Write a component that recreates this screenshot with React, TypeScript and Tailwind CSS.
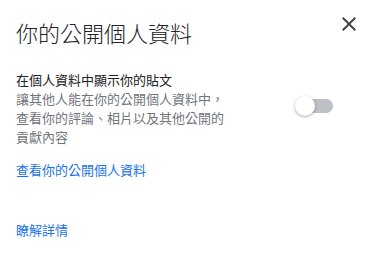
import React, { useState } from "react";

const font = { fontFamily: '"Noto Sans CJK TC", "Noto Sans", Roboto, sans-serif' };

export default function App() {
  const [showPosts, setShowPosts] = useState(false);

  return (
    <div className="w-[382px] h-[256px] bg-white overflow-hidden" style={font}>
      {/* Header */}
      <div className="flex items-start justify-between pl-4 pr-[21px] pt-[18px]">
        <h1 className="text-[22px] leading-[28px] font-light text-[#202124]">
          你的公開個人資料
        </h1>
        <button className="-mt-[6px] w-6 h-6 flex items-center justify-center text-[#444746]">
          <svg viewBox="0 0 24 24" className="w-6 h-6" fill="currentColor">
            <path d="M19 6.41L17.59 5 12 10.59 6.41 5 5 6.41 10.59 12 5 17.59 6.41 19 12 13.41 17.59 19 19 17.59 13.41 12z" />
          </svg>
        </button>
      </div>

      {/* Setting row */}
      <div className="flex items-center pl-4 mt-[25px]">
        <div className="w-[210px] text-[13px] leading-[19px]">
          <div className="text-[#202124] leading-[18px]">在個人資料中顯示你的貼文</div>
          <div className="text-[#70757a]">
            讓其他人能在你的公開個人資料中，查看你的評論、相片以及其他公開的貢獻內容
          </div>
        </div>
        <button
          onClick={() => setShowPosts(!showPosts)}
          className="relative w-[38px] h-[20px] ml-auto mr-[49px] -mt-[6px]"
        >
          <span className="absolute left-[4px] top-[3px] w-[34px] h-[14px] rounded-full bg-[#bdc1c6]" />
          <span className="absolute left-0 top-0 w-[20px] h-[20px] rounded-full bg-white shadow-[0_1px_3px_rgba(0,0,0,0.35)]" />
        </button>
      </div>

      {/* Links */}
      <div className="pl-4 mt-[14px] text-[13px] leading-[19px] text-[#1a73e8]">
        <a className="block">查看你的公開個人資料</a>
        <a className="block mt-[41px]">瞭解詳情</a>
      </div>
    </div>
  );
}
